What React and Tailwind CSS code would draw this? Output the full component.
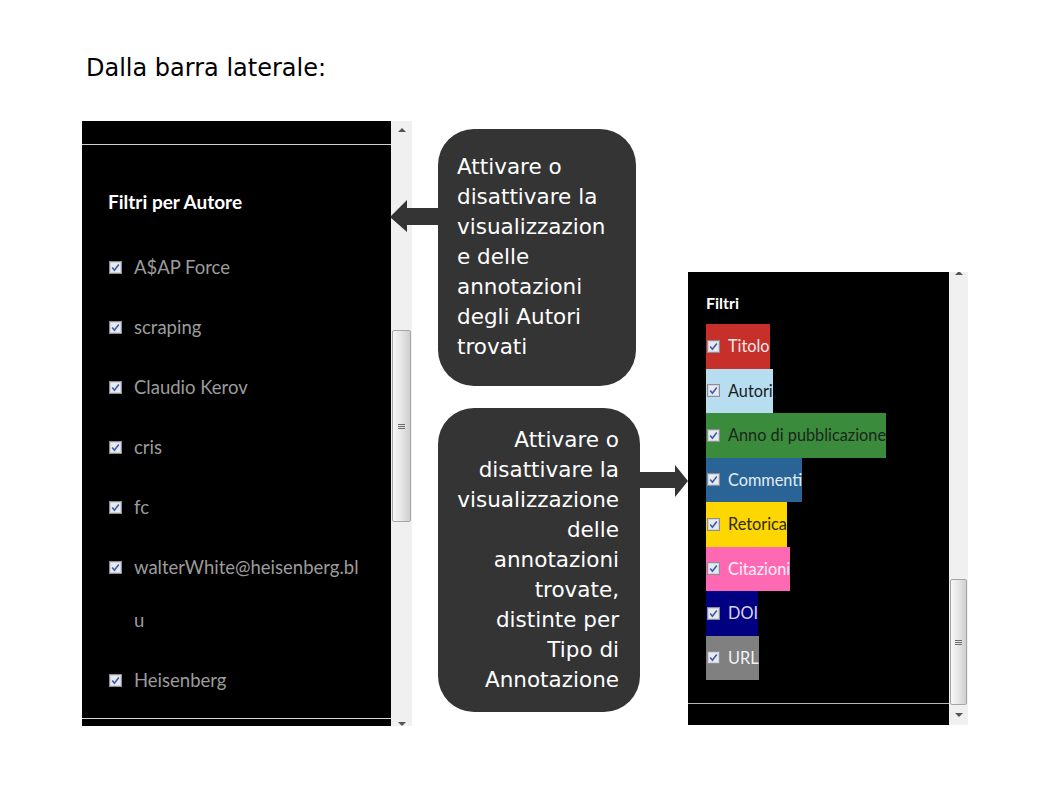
import React from 'react';

const authors = [
    ['A$AP Force'],
    ['scraping'],
    ['Claudio Kerov'],
    ['cris'],
    ['fc'],
    ['walterWhite@heisenberg.bl', 'u'],
    ['Heisenberg'],
];

const filters = [
    { label: 'Titolo', bg: 'bg-[#c62f2a]', fg: 'text-[#f7e9e9]' },
    { label: 'Autori', bg: 'bg-[#b6def0]', fg: 'text-[#1c1c1c]' },
    { label: 'Anno di pubblicazione', bg: 'bg-[#3b8b3d]', fg: 'text-[#1a261a]' },
    { label: 'Commenti', bg: 'bg-[#2a6496]', fg: 'text-[#e4ecf3]' },
    { label: 'Retorica', bg: 'bg-[#ffd700]', fg: 'text-[#2a2a10]' },
    { label: 'Citazioni', bg: 'bg-[#ff69b4]', fg: 'text-[#fff0f7]' },
    { label: 'DOI', bg: 'bg-[#000080]', fg: 'text-[#d6d6ee]' },
    { label: 'URL', bg: 'bg-[#808080]', fg: 'text-[#f2f2f2]' },
];

// old windows style checkbox, always ticked
function Check({ className = '' }) {
    return (
        <svg width="13" height="13" viewBox="0 0 13 13" className={'shrink-0 ' + className}>
            <rect x="0.5" y="0.5" width="12" height="12" fill="#e9eaef" stroke="#8e8f94" />
            <rect x="1.5" y="1.5" width="10" height="10" fill="none" stroke="#d2d4dc" />
            <path d="M3.2 6.6 L5.4 9.2 L9.8 3.4" fill="none" stroke="#3a5cb0" strokeWidth="1.6" />
        </svg>
    );
}

function Thumb({ className }) {
    return (
        <div className={'mx-[1px] rounded-[2px] border border-[#a6a6a6] bg-linear-to-r from-[#f7f7f7] via-[#e6e6e6] to-[#cfcfcf] flex items-center justify-center ' + className}>
            <div className="flex flex-col gap-[1px]">
                <div className="w-[7px] h-[1px] bg-[#6b6b6b]" />
                <div className="w-[7px] h-[1px] bg-[#6b6b6b]" />
                <div className="w-[7px] h-[1px] bg-[#6b6b6b]" />
            </div>
        </div>
    );
}

function Up() {
    return <div className="w-0 h-0 border-l-[4px] border-r-[4px] border-b-[4px] border-l-transparent border-r-transparent border-b-[#555]" />;
}

function Down() {
    return <div className="w-0 h-0 border-l-[4px] border-r-[4px] border-t-[4px] border-l-transparent border-r-transparent border-t-[#555]" />;
}

export default function App() {
    return (
        <div className="w-[1058px] h-[794px] bg-white overflow-hidden font-['DejaVu_Sans',sans-serif]">
            <div className="pt-[52px] pl-[86px] text-[24px] leading-[32px] text-black">Dalla barra laterale:</div>

            <div className="relative flex items-start pl-[82px] mt-[37px]">
                {/* sidebar: filtri per autore */}
                <div className="flex h-[605px] w-[330px]">
                    <div className="flex flex-col w-[309px] bg-black font-['Lato',sans-serif]">
                        <div className="h-[24px] border-b border-[#d0d0d0]" />
                        <div className="flex-1 overflow-hidden pl-[27px] pt-[45px]">
                            <h3 className="-ml-[1px] text-[19px] leading-[24px] font-bold text-white">Filtri per Autore</h3>
                            <ul className="mt-[27px] flex flex-col gap-[7px]">
                                {authors.map((lines) => (
                                    <li key={lines[0]} className="flex items-start text-[18.5px] leading-[53px] text-[#9c9c9c]">
                                        <Check className="mt-[20px]" />
                                        <span className="ml-[12px]">
                                            {lines.map((l, i) => <div key={i}>{l}</div>)}
                                        </span>
                                    </li>
                                ))}
                            </ul>
                        </div>
                        <div className="h-[8px] border-t border-[#d8d8d8]" />
                    </div>
                    <div className="w-[21px] bg-[#f0f0f0] flex flex-col overflow-hidden">
                        <div className="h-[17px] flex items-center justify-center"><Up /></div>
                        <div className="h-[192px]" />
                        <Thumb className="h-[192px]" />
                        <div className="flex-1" />
                        <div className="h-[4px] flex justify-center items-end"><Down /></div>
                    </div>
                </div>

                {/* callouts */}
                <div className="ml-[26px] flex flex-col text-white text-[21.5px] leading-[30px]">
                    <div className="mt-[8px] w-[198px] h-[257px] rounded-[36px] bg-[#343434] pl-[19px] pt-[23px] whitespace-nowrap">
                        <div>Attivare o</div>
                        <div>disattivare la</div>
                        <div>visualizzazion</div>
                        <div>e delle</div>
                        <div>annotazioni</div>
                        <div>degli Autori</div>
                        <div>trovati</div>
                    </div>
                    <div className="mt-[22px] w-[202px] h-[304px] rounded-[36px] bg-[#343434] pr-[21px] pt-[17px] text-right whitespace-nowrap">
                        <div>Attivare o</div>
                        <div>disattivare la</div>
                        <div>visualizzazione</div>
                        <div>delle</div>
                        <div>annotazioni</div>
                        <div>trovate,</div>
                        <div>distinte per</div>
                        <div>Tipo di</div>
                        <div>Annotazione</div>
                    </div>
                </div>

                {/* sidebar: filtri per tipo */}
                <div className="ml-[48px] mt-[151px] flex h-[453px] w-[280px]">
                    <div className="flex flex-col w-[261px] bg-black font-['Lato',sans-serif]">
                        <div className="h-[431px] overflow-hidden pl-[18px] pt-[21px]">
                            <h3 className="text-[16px] leading-[20px] font-bold text-white">Filtri</h3>
                            <div className="mt-[11px] flex flex-col items-start">
                                {filters.map((f) => (
                                    <div key={f.label} className={'h-[44.5px] flex items-center ' + f.bg}>
                                        <Check className="ml-[1px]" />
                                        <span className={'ml-[8px] text-[16.3px] leading-[20px] whitespace-nowrap ' + f.fg}>{f.label}</span>
                                    </div>
                                ))}
                            </div>
                        </div>
                        <div className="flex-1 border-t border-[#b8b8b8]" />
                    </div>
                    <div className="w-[19px] bg-[#f0f0f0] flex flex-col overflow-hidden">
                        <div className="h-[3px] flex justify-center items-end"><Up /></div>
                        <div className="h-[304px]" />
                        <Thumb className="h-[126px]" />
                        <div className="flex-1 flex items-center justify-center"><Down /></div>
                    </div>
                </div>

                {/* pointer arrows */}
                <svg className="absolute left-[390px] top-[79px]" width="50" height="32" viewBox="0 0 50 32">
                    <path d="M0 17 L17 0 L17 8 L50 8 L50 25 L17 25 L17 32 Z" fill="#343434" />
                </svg>
                <svg className="absolute left-[636px] top-[344px]" width="52" height="32" viewBox="0 0 52 32">
                    <path d="M0 7 L39 7 L39 0 L52 16 L39 32 L39 23 L0 23 Z" fill="#343434" />
                </svg>
            </div>
        </div>
    );
}
